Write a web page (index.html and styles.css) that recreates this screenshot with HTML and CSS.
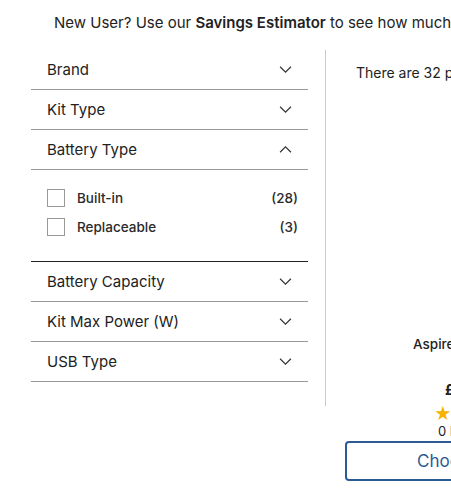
FILE: index.html
```html
<!DOCTYPE html>
<html>
<head>
<meta charset="utf-8">
<link rel="stylesheet" href="styles.css">
</head>
<body>
<div class="banner">New User? Use our <b>Savings Estimator</b> to see how much you could save</div>
<div class="page">
  <aside class="filters">
    <div class="row"><span>Brand</span><svg class="chev" viewBox="0 0 12 8"><path d="M1 1.5l5 5 5-5"/></svg></div>
    <div class="row"><span>Kit Type</span><svg class="chev" viewBox="0 0 12 8"><path d="M1 1.5l5 5 5-5"/></svg></div>
    <div class="row open"><span>Battery Type</span><svg class="chev" viewBox="0 0 12 8"><path d="M1 6.5l5-5 5 5"/></svg></div>
    <div class="options">
      <label class="opt"><span class="box"></span><span class="name">Built-in</span><span class="count">(28)</span></label>
      <label class="opt"><span class="box"></span><span class="name">Replaceable</span><span class="count">(3)</span></label>
    </div>
    <div class="row"><span>Battery Capacity</span><svg class="chev" viewBox="0 0 12 8"><path d="M1 1.5l5 5 5-5"/></svg></div>
    <div class="row"><span>Kit Max Power (W)</span><svg class="chev" viewBox="0 0 12 8"><path d="M1 1.5l5 5 5-5"/></svg></div>
    <div class="row"><span>USB Type</span><svg class="chev" viewBox="0 0 12 8"><path d="M1 1.5l5 5 5-5"/></svg></div>
  </aside>
  <div class="divider"></div>
  <main class="results">
    <div class="count-text">There are 32 products</div>
    <div class="card">
      <div class="pname">Aspire Kit</div>
      <div class="price">£29.99</div>
      <div class="stars">★★★★★</div>
      <div class="reviews">0 Reviews</div>
      <div class="btn">Choose Options</div>
    </div>
  </main>
</div>
</body>
</html>
```
FILE: styles.css
```css
* { box-sizing: border-box; }
html, body { margin: 0; padding: 0; background: #fff; overflow: hidden; }
body { font-family: Inter, "Noto Sans", sans-serif; color: #222; width: 451px; height: 494px; }

.banner {
  white-space: nowrap;
  padding: 14px 0 0 54px;
  height: 50px;
  font-size: 15px;
  line-height: 18px;
  color: #222;
}
.banner b { font-weight: 600; }

.page { display: flex; align-items: flex-start; }

.filters { width: 277px; margin-left: 31px; flex: none; }

.row {
  height: 40px;
  display: flex;
  align-items: center;
  justify-content: space-between;
  padding: 0 16px 0 16px;
  border-bottom: 1px solid #999;
  font-size: 15px;
  color: #222;
}
.chev { width: 13px; height: 9px; fill: none; stroke: #333; stroke-width: 1.1; }

.options { padding: 13px 0 20px 0; border-bottom: 1px solid #222; }
.opt {
  display: flex;
  align-items: center;
  height: 29px;
  padding: 0 10px 0 16px;
  font-size: 13.5px;
  font-weight: 500;
  color: #2a2a2a;
}
.box { width: 18px; height: 18px; border: 1px solid #999; margin-right: 12px; flex: none; }
.name { flex: 1; }

.divider { width: 1px; background: #ccc; height: 356px; margin-left: 17px; flex: none; }

.results { flex: 1; min-width: 0; overflow: hidden; white-space: nowrap; }
.count-text { font-size: 14px; padding: 14px 0 0 30px; height: 286px; }
.card { margin-left: 20px; }
.pname { font-size: 13.5px; font-weight: 500; padding-left: 67px; height: 44px; }
.price { font-size: 15px; font-weight: 700; padding-left: 99px; height: 24px; }
.stars { color: #f5b400; font-size: 17px; padding-left: 88px; height: 19px; line-height: 20px; }
.reviews { font-size: 13px; padding-left: 92px; height: 13px; line-height: 16px; }
.btn {
  margin-top: 5px;
  margin-left: -1px;
  width: 200px;
  height: 40px;
  border: 2px solid #2c5b94;
  border-radius: 4px;
  color: #2c5b94;
  font-size: 17px;
  line-height: 36px;
  padding-left: 70px;
}
```
